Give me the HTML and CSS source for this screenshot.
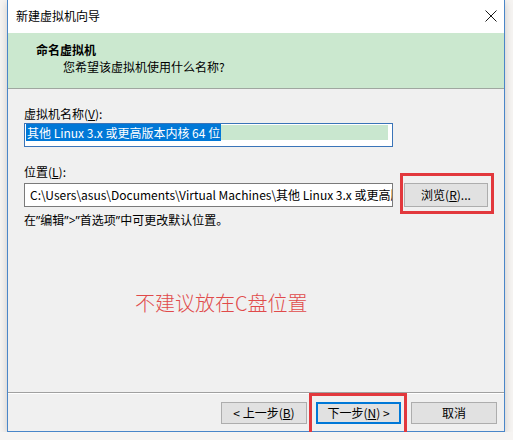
FILE: index.html
```html
<!DOCTYPE html>
<html lang="zh-CN">
<head>
    <meta charset="UTF-8">
    <title>新建虚拟机向导</title>
    <link rel="stylesheet" href="styles.css">
</head>
<body>
    <div class="window">
        <!-- Barra de título -->
        <div class="titlebar">
            <span class="title">新建虚拟机向导</span>
            <span class="close">
                <svg width="12" height="12" viewBox="0 0 12 12">
                    <path d="M0.5 0.5 L11.5 11.5 M11.5 0.5 L0.5 11.5" stroke="#1a1a1a" stroke-width="1" fill="none"/>
                </svg>
            </span>
        </div>

        <!-- Cabeçalho do passo -->
        <div class="header">
            <div class="header-title">命名虚拟机</div>
            <div class="header-sub">您希望该虚拟机使用什么名称?</div>
        </div>

        <!-- Conteúdo -->
        <div class="content">
            <div class="field-label">虚拟机名称(<u>V</u>):</div>
            <div class="textbox focused">
                <div class="fill"><span class="selected">其他 Linux 3.x 或更高版本内核 64 位</span></div>
            </div>

            <div class="field-label second">位置(<u>L</u>):</div>
            <div class="path-row">
                <div class="textbox path">C:\Users\asus\Documents\Virtual Machines\其他 Linux 3.x 或更高版</div>
                <div class="mark mark-browse">
                    <button class="btn browse">浏览(<u>R</u>)...</button>
                </div>
            </div>
            <div class="hint">在<span class="q">”</span>编辑<span class="q">”&gt;”</span>首选项<span class="q">”</span>中可更改默认位置。</div>

            <div class="note">不建议放在C盘位置</div>
        </div>

        <!-- Botões -->
        <div class="footer">
            <button class="btn">&lt; 上一步(<u>B</u>)</button>
            <div class="mark mark-next">
                <button class="btn default">下一步(<u>N</u>) &gt;</button>
            </div>
            <button class="btn">取消</button>
        </div>
    </div>
</body>
</html>
```

FILE: styles.css
```css
/* Janela do assistente */
body {
    margin: 0;
    background: #f6f4f2;
    font-family: "Noto Sans CJK SC", "Noto Sans", sans-serif;
    font-size: 12px;
    color: #000;
}

.window {
    width: 496px;
    height: 431px;
    margin-left: 7px;
    border: 1px solid #4a86c8;
    border-top: none;
    background: #f0f0f0;
    display: flex;
    flex-direction: column;
    box-shadow: 0 2px 8px rgba(0, 0, 0, 0.18);
}

.titlebar {
    height: 31px;
    background: #ffffff;
    display: flex;
    align-items: center;
    justify-content: space-between;
    padding: 0 5px 2px 8px;
}

.close {
    display: flex;
    margin-right: 2px;
}

/* Cabeçalho verde */
.header {
    height: 56px;
    background: #cbe8cf;
    border-bottom: 1px solid #9fa7a0;
    box-sizing: border-box;
    padding: 8px 0 0 28px;
}

.header-title {
    font-weight: bold;
    line-height: 17px;
}

.header-sub {
    line-height: 17px;
    padding-left: 27px;
}

.content {
    flex: 1;
    padding: 17px 8px 0 16px;
    position: relative;
}

.field-label {
    line-height: 16px;
}

.field-label.second {
    margin-top: 17px;
}

.textbox {
    box-sizing: border-box;
    width: 369px;
    height: 24px;
    background: #ffffff;
    border: 1px solid #7a7a7a;
}

.textbox.focused {
    margin-top: 1px;
    border-color: #3a74b8;
    padding: 1px 4px 0 1px;
}

.fill {
    background: #c9e7cf;
    height: 15px;
    line-height: 15px;
}

.selected {
    background: #0078d7;
    color: #ffffff;
    padding: 0 1px;
}

.path-row {
    display: flex;
    align-items: flex-start;
    margin-top: 3px;
}

.textbox.path {
    padding: 0 0 0 5px;
    line-height: 22px;
    white-space: nowrap;
    overflow: hidden;
}

.hint {
    margin-top: 5px;
    line-height: 16px;
}

/* Aspas estreitas, como no texto do sistema */
.q {
    font-family: "Noto Sans", sans-serif;
}

.note {
    margin-top: 61px;
    margin-left: 111px;
    font-size: 20px;
    line-height: 26px;
    color: #e04a4a;
    font-weight: 300;
}

/* Botões padrão */
.btn {
    font-family: inherit;
    font-size: 12px;
    height: 22px;
    background: #e1e1e1;
    border: 1px solid #adadad;
    padding: 0;
    color: #000;
    line-height: 18px;
}

.btn.browse {
    width: 84px;
    height: 24px;
    margin-left: 11px;
}

.btn.default {
    border: 2px solid #0078d7;
}

.footer {
    height: 39px;
    border-top: 1px solid #a0a0a0;
    box-shadow: inset 0 1px 0 #ffffff;
    display: flex;
    justify-content: flex-end;
    align-items: flex-start;
    padding: 9px 7px 0 0;
    box-sizing: border-box;
}

.footer .btn {
    width: 86px;
}

.footer > .btn:first-child {
    margin-right: 9px;
}

.footer .btn.default {
    width: 85px;
}

.footer .mark-next {
    margin-right: 10px;
}

/* Marcações vermelhas por cima dos botões */
.mark {
    position: relative;
    display: flex;
}

.mark::after {
    content: '';
    position: absolute;
    border: 3px solid #e2383d;
}

.mark-browse::after {
    left: 7px;
    right: -6px;
    top: -10px;
    bottom: -7px;
}

.mark-next::after {
    left: -7px;
    right: -6px;
    top: -9px;
    bottom: -12px;
}
```
